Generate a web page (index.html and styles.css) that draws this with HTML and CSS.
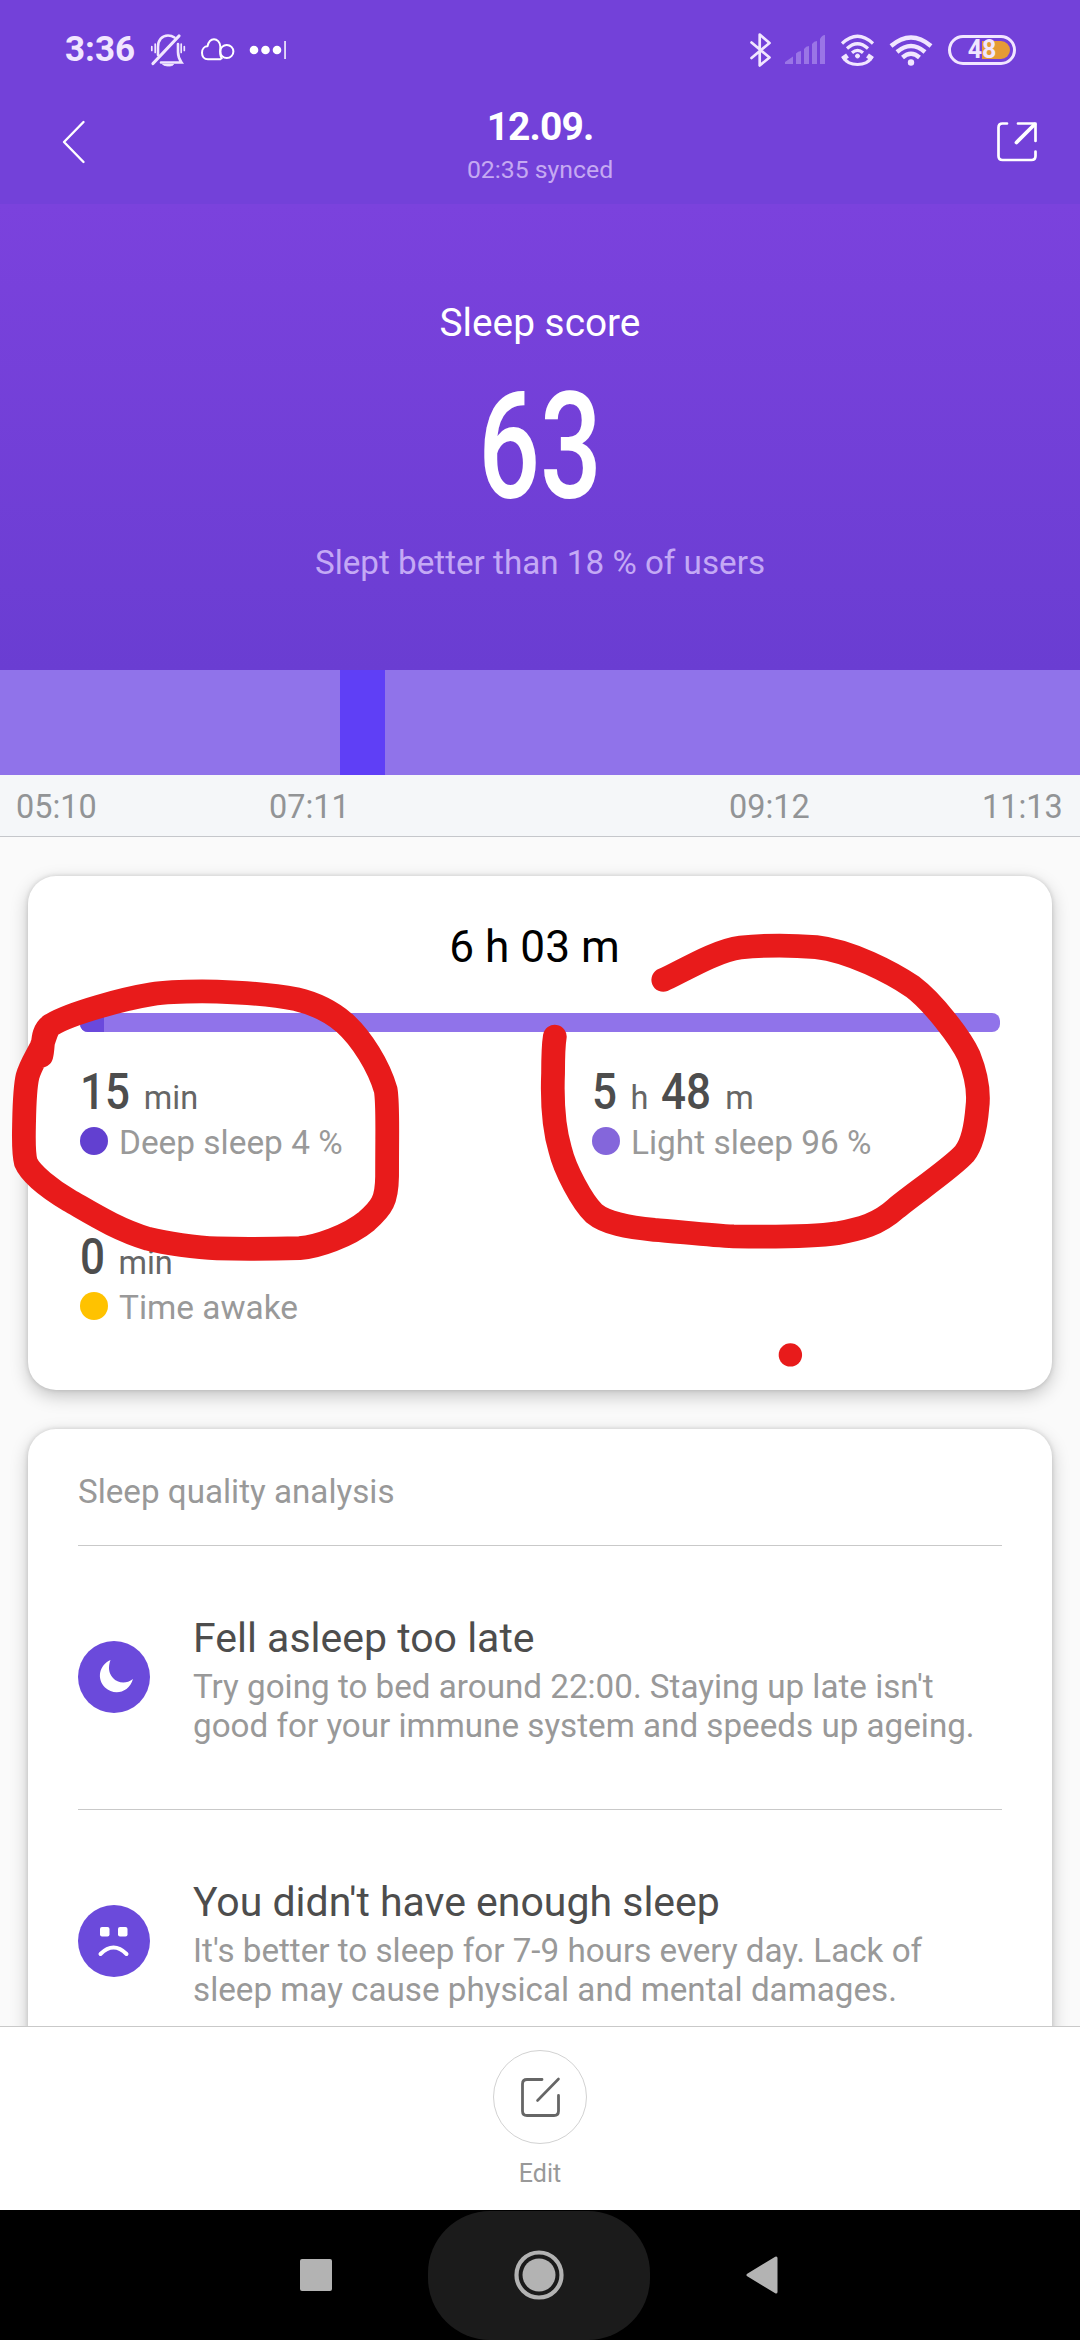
FILE: index.html
```html
<!DOCTYPE html>
<html lang="en">
<head>
<meta charset="utf-8">
<title>Sleep</title>
<link rel="stylesheet" href="styles.css">
</head>
<body>
<div class="screen">
  <header class="top">
    <div class="status">
      <span class="clock">3:36</span>
      <svg class="ic-bell" width="36" height="36" viewBox="150 32 36 36" fill="none" stroke="#f1e6ff" stroke-width="2.6" stroke-linecap="round">
        <path d="M158 55V47c0-7 4-11.500 10-11.500 2.500 0 4.500.6 6.500 2"/>
        <path d="M178 44v8c0 4 1 7 3.500 10.500H161"/>
        <path d="M153 63.500L179 36" stroke-width="3.200"/>
        <path d="M163 64.500h10.500c-1.500 2-8.500 2-10.500 0z" fill="#f1e6ff" stroke-width="1"/>
        <path d="M155.200 44v8.500M151.800 46.500v4M181.200 44v8.500M184.300 46.500v4" stroke-width="1.700"/>
      </svg>
      <svg class="ic-cloud" width="36" height="26" viewBox="200 37 36 26" fill="none" stroke="#fff" stroke-width="2" stroke-linecap="round" stroke-linejoin="round">
        <path d="M220.500 59.300H208c-4 0-6-3-6-6.500 0-4 2.500-6.500 5.500-6.500 1-4.500 3.500-7 6.500-7s6 2.500 6.300 7v8c.2 2 .8 3 1.500 4"/>
        <circle cx="226.800" cy="51.500" r="6.600"/>
      </svg>
      <svg class="ic-more" width="38" height="20" viewBox="249 39 38 20" fill="#fff">
        <circle cx="254" cy="49" r="4.300"/><circle cx="265.500" cy="49" r="4.300"/><circle cx="277" cy="49" r="4.300"/>
        <path d="M284.300 40h1.500v18h-1.500z"/>
      </svg>
      <span class="spacer"></span>
      <svg class="ic-bt" width="24" height="36" viewBox="749 31 24 36" fill="none" stroke="#f1e6ff" stroke-width="2.700" stroke-linejoin="round" stroke-linecap="round">
        <path d="M751.500 41.500L769.500 56.500 759.700 64.500V33.500L769.500 42 751.500 57"/>
      </svg>
      <svg class="ic-signal" width="42" height="30" viewBox="784 34 42 30" fill="#9a75e6">
        <path d="M785 61l8-5.500v7.500h-8zM796 52.500q2-2.500 5-2.500v13h-5zM804 48q2-3 5-3v18h-5zM812 43q2-3 5-3v23h-5zM820 38q2-4 5-4v29h-5z"/>
      </svg>
      <svg class="ic-call" width="36" height="34" viewBox="840 32 36 34" fill="none" stroke="#f1e6ff" stroke-width="3.200">
        <path d="M842 42.500q15.500-14.500 31 0M847 47.500q10.500-9.500 21 0M852 51.800q5.500-4.800 11 0"/>
        <circle cx="857.500" cy="55" r="2" fill="#f1e6ff" stroke-width="1"/>
        <path d="M843.500 56.500q4 7 14 7t14-7" stroke-width="3.200"/>
        <path d="M842.500 58l5-3.500M872.500 58l-5-3.500" stroke-width="5"/>
      </svg>
      <svg class="ic-wifi" width="44" height="32" viewBox="889 33 44 32" fill="none" stroke="#f1e6ff" stroke-width="4.400">
        <path d="M891 45q20-17 40 0M897 51q14-12 28 0M902.500 56.500q8.500-7.500 17 0"/>
        <circle cx="911" cy="61.500" r="3.200" fill="#f1e6ff" stroke="none"/>
      </svg>
      <span class="battery"><span class="level"></span><span class="pct">48</span></span>
    </div>
    <div class="appbar">
      <svg class="back" width="26" height="46" viewBox="61 119 26 46" fill="none" stroke="#fff" stroke-width="2.400" stroke-linecap="round" stroke-linejoin="round"><path d="M83.500 122L64 142l19.500 20"/></svg>
      <div class="titles">
        <h1>12.09.</h1>
        <p>02:35 synced</p>
      </div>
      <svg class="share" width="42" height="42" viewBox="996 121 42 42" fill="none" stroke="#fff" stroke-width="2.700" stroke-linecap="round" stroke-linejoin="round"><path d="M1007 123.500h-4.500q-4 0-4 4v28.500q0 4 4 4h29q4 0 4-4v-4.500M1018 123.500h17.500V141"/><path d="M1034.500 124.500L1016.500 142.500" stroke-width="3.800"/></svg>
    </div>
  </header>
  <section class="hero">
    <p class="hero-label">Sleep score</p>
    <p class="score">63</p>
    <p class="hero-note">Slept better than 18 % of users</p>
  </section>
  <div class="chart"><span class="light-a"></span><span class="deep"></span></div>
  <div class="axis"><span>05:10</span><span>07:11</span><span>09:12</span><span>11:13</span></div>
  <main class="content">
    <section class="card summary">
      <p class="total">6 h 03 m</p>
      <div class="ratio"><span></span></div>
      <div class="stats">
        <div class="stat">
          <div class="value"><b class="two">15</b><i>min</i></div>
          <div class="label"><span class="dot dot-deep"></span><span>Deep sleep 4 %</span></div>
        </div>
        <div class="stat">
          <div class="value"><b>5</b><i>h</i><b class="two">48</b><i>m</i></div>
          <div class="label"><span class="dot dot-light"></span><span>Light sleep 96 %</span></div>
        </div>
        <div class="stat">
          <div class="value"><b>0</b><i>min</i></div>
          <div class="label"><span class="dot dot-awake"></span><span>Time awake</span></div>
        </div>
      </div>
    </section>
    <section class="card analysis">
      <h2>Sleep quality analysis</h2>
      <article class="item">
        <svg width="72" height="72" viewBox="0 0 72 72"><circle cx="36" cy="36" r="36" fill="#6b4adb"/><path d="M32.500 19C21 24 18.500 38 27 46.500c9 8.500 24 5.500 28-8.500-7 5.500-15.500 4-20-1-4.500-5-5-11-2.500-18z" fill="#fff"/></svg>
        <div class="text">
          <h3>Fell asleep too late</h3>
          <p>Try going to bed around 22:00. Staying up late isn't<br>good for your immune system and speeds up ageing.</p>
        </div>
      </article>
      <article class="item">
        <svg width="72" height="72" viewBox="0 0 72 72"><circle cx="36" cy="36" r="36" fill="#6b4adb"/><rect x="22" y="22" width="9.500" height="9.500" rx="2" fill="#fff"/><rect x="40" y="22" width="9.500" height="9.500" rx="2" fill="#fff"/><path d="M22.500 49q13-13 26 0" fill="none" stroke="#fff" stroke-width="4" stroke-linecap="round"/></svg>
        <div class="text">
          <h3>You didn't have enough sleep</h3>
          <p>It's better to sleep for 7-9 hours every day. Lack of<br>sleep may cause physical and mental damages.</p>
        </div>
      </article>
    </section>
  </main>
  <footer class="actions">
    <span class="edit"><svg width="42" height="42" viewBox="518 2075 42 42" fill="none" stroke="#666" stroke-width="2.800" stroke-linecap="round" stroke-linejoin="round"><path d="M541 2078.500h-15q-4.500 0-4.500 4.500v27q0 4.500 4.500 4.500h27q4.500 0 4.500-4.500v-15.500"/><path d="M557.500 2078l-21 21.500" stroke-width="2.600"/></svg></span>
    <span class="edit-label">Edit</span>
  </footer>
  <nav class="sysnav">
    <svg width="32" height="32" viewBox="0 0 32 32"><rect width="32" height="32" rx="2" fill="#b3b3b3"/></svg>
    <span class="home"><svg width="50" height="50" viewBox="0 0 50 50"><circle cx="25" cy="25" r="22.500" fill="none" stroke="#b3b3b3" stroke-width="4.200"/><circle cx="25" cy="25" r="16.500" fill="#b3b3b3"/></svg></span>
    <svg class="tri" width="32" height="38" viewBox="0 0 32 38"><path d="M2 19L30 2v34z" fill="#b3b3b3" stroke="#b3b3b3" stroke-width="3" stroke-linejoin="round"/></svg>
  </nav>
  <svg class="marks" width="1080" height="540" viewBox="0 0 3136 1568" fill="none" stroke="#e81b1b" stroke-width="69" stroke-linecap="round" stroke-linejoin="round">
    <path d="M120 510C128 480 118 440 150 420C210 385 360 345 440 332C500 322 570 323 630 324C720 327 800 334 860 346C920 360 965 385 1000 415C1050 460 1100 540 1120 610C1127 650 1124 700 1124 860C1123 930 1110 950 1065 990C1010 1035 920 1065 870 1069C800 1071 700 1072 630 1070C570 1068 480 1055 430 1042C340 1015 270 970 200 930C150 900 90 855 75 820C67 790 69 750 70 700C71 650 73 600 80 570C88 540 105 515 120 485C128 465 130 450 140 430"/>
    <path d="M1926 290C1965 275 2075 205 2150 196C2220 189 2310 190 2370 195C2470 206 2590 270 2650 310C2710 355 2790 460 2813 510C2835 565 2843 620 2838 660C2834 710 2825 765 2800 795C2765 835 2640 920 2600 955C2550 1000 2500 1013 2430 1026C2360 1037 2200 1036 2130 1035C2060 1032 1960 1020 1900 1016C1820 1008 1760 997 1725 968C1690 935 1640 840 1627 785C1612 735 1602 660 1606 560C1606 520 1607 480 1611 455"/>
    <circle cx="2295" cy="1379" r="34" fill="#e81b1b" stroke="none"/>
  </svg>
</div>
</body>
</html>
```
FILE: styles.css
```css
* { box-sizing: border-box; margin: 0; padding: 0; }
body { font-family: Roboto, "Noto Sans", sans-serif; background: #fafafa; }
svg { display: block; flex: none; }
.screen { position: relative; width: 1080px; height: 2340px; display: flex; flex-direction: column; overflow: hidden; }

/* status and app bar */
.top { background: #7341d9; height: 204px; flex: none; }
.status { display: flex; align-items: center; height: 100px; padding: 0 64px 0 65px; }
.clock { font-size: 35px; font-weight: 700; line-height: 100px; color: #f1e6ff; width: 70px; }
.ic-bell { margin-left: 15px; }
.ic-cloud { margin-left: 14px; }
.ic-more { margin-left: 13px; }
.spacer { flex: 1; }
.ic-signal { margin-left: 11px; }
.ic-call { margin-left: 14px; }
.ic-wifi { margin-left: 13px; }
.battery { position: relative; width: 68px; height: 30px; margin-left: 15px; border: 3px solid #f1e6ff; border-radius: 15px; }
.level { position: absolute; right: 3px; top: 3px; width: 28px; height: 18px; background: #e59b35; border-radius: 0 9px 9px 0; }
.pct { position: absolute; left: 0; right: 0; top: -2px; text-align: center; font-size: 25px; line-height: 28px; font-weight: 700; color: #f1e6ff; }
.appbar { display: flex; justify-content: space-between; align-items: flex-start; height: 104px; padding: 0 42px 0 61px; }
.back { margin-top: 19px; }
.share { margin-top: 21px; }
.titles { padding: 4px 3px 0 0; text-align: center; color: #fff; }
.titles h1 { font-size: 39px; line-height: 46px; font-weight: 700; letter-spacing: -0.9px; }
.titles p { margin-top: 4px; font-size: 24.8px; line-height: 32px; color: #c5a9f2; }

/* score */
.hero { height: 466px; flex: none; padding-top: 95px; text-align: center; color: #fff; background: linear-gradient(#7b42dd, #6a3dd2); }
.hero-label { font-size: 38.800px; line-height: 48px; }
.score { margin: 26px 0 22px; font-size: 149px; line-height: 148px; font-weight: 500; transform: scaleX(.73); }
.hero-note { font-size: 33.200px; line-height: 40px; color: #c4a9f5; }

/* timeline */
.chart { display: flex; height: 105px; flex: none; background: #9073ea; }
.light-a { width: 340px; }
.deep { width: 45px; background: #5f3ff6; }
.axis { display: grid; grid-template-columns: 253px 460px 253px auto; height: 62px; flex: none; padding-left: 16px; line-height: 64px; font-size: 32.400px; color: #929496; background: #f5f7f9; border-bottom: 1px solid #c5c7cb; }

/* cards */
.content { flex: 1; min-height: 0; overflow: hidden; padding: 39px 28px 0; display: flex; flex-direction: column; gap: 39px; }
.card { flex: none; background: #fff; border-radius: 28px; box-shadow: 0 6px 18px rgba(0,0,0,.22), 0 0 5px rgba(0,0,0,.14); }
.summary { height: 514px; padding: 46px 52px 0; }
.total { padding-right: 11px; text-align: center; font-size: 44.200px; line-height: 50px; color: #000; }
.ratio { margin-top: 41px; height: 19px; border-radius: 8px; background: #9073ea; overflow: hidden; }
.ratio span { display: block; width: 24px; height: 19px; background: #6a49dc; }
.stats { display: grid; grid-template-columns: 512px 1fr; row-gap: 67px; margin-top: 32px; }
.value { display: flex; align-items: baseline; height: 56px; line-height: 56px; color: #4d4d4d; }
.value b { font-size: 50px; font-weight: 500; transform: scaleX(.88); transform-origin: left; margin-right: 10px; }
.value b.two { margin-right: 7px; }
.value i { font-style: normal; font-size: 32.500px; line-height: 1; color: #666; }
.value i + b { margin-left: 13px; }
.label { display: flex; align-items: center; height: 40px; margin-top: 3px; font-size: 33.400px; line-height: 40px; color: #999; }
.dot { width: 28px; height: 28px; border-radius: 50%; margin: -5px 11px 0 0; }
.stat { height: 98px; }
.dot-deep { background: #6240d0; }
.dot-light { background: #8466db; }
.dot-awake { background: #ffc200; }
.analysis { height: 720px; padding: 43px 50px 0; }
.analysis h2 { font-size: 33.200px; line-height: 40px; font-weight: 400; color: #999; margin-bottom: 33px; }
.item { display: flex; gap: 43px; height: 264px; border-top: 1px solid #c9c9c9; }
.item svg { margin-top: 95px; }
.text { padding-top: 69px; white-space: nowrap; }
.text h3 { font-size: 41px; line-height: 46px; font-weight: 400; color: #4d4d4d; }
.text p { margin-top: 6px; font-size: 33.200px; line-height: 39px; color: #999; }

/* bottom bars */
.actions { height: 184px; flex: none; background: #fff; border-top: 1px solid #c9c9c9; display: flex; flex-direction: column; align-items: center; padding-top: 23px; }
.edit { width: 94px; height: 94px; border: 1.5px solid #d2d2d2; border-radius: 50%; display: flex; align-items: center; justify-content: center; }
.edit-label { margin-top: 14px; font-size: 25px; line-height: 32px; color: #999; }
.sysnav { height: 130px; flex: none; background: #000; display: flex; align-items: center; justify-content: center; gap: 96px; padding-right: 3px; }
.home { width: 222px; height: 129px; border-radius: 62px; background: #1b1b1b; display: flex; align-items: center; justify-content: center; }

/* hand-drawn marks over the summary card */
.marks { position: absolute; left: 0; top: 880px; }
```
